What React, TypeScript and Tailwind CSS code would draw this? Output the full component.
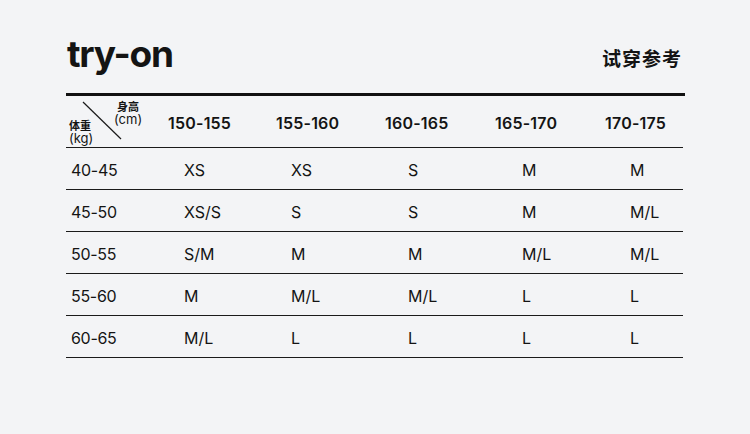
const heights = ['150-155', '155-160', '160-165', '165-170', '170-175'];

const rows: { weight: string; sizes: string[] }[] = [
  { weight: '40-45', sizes: ['XS', 'XS', 'S', 'M', 'M'] },
  { weight: '45-50', sizes: ['XS/S', 'S', 'S', 'M', 'M/L'] },
  { weight: '50-55', sizes: ['S/M', 'M', 'M', 'M/L', 'M/L'] },
  { weight: '55-60', sizes: ['M', 'M/L', 'M/L', 'L', 'L'] },
  { weight: '60-65', sizes: ['M/L', 'L', 'L', 'L', 'L'] },
];

// data cells sit a bit right of the header labels, not evenly
const cellPad = ['pl-[16px]', 'pl-[15px]', 'pl-[23px]', 'pl-[27px]', 'pl-[25px]'];

const grid = 'grid grid-cols-[102px_108px_109px_110px_110px_80px]';

export default function App() {
  return (
    <div
      className="w-[750px] h-[434px] bg-[#f3f4f6] text-[#141414] pl-[66px] pt-[24px]"
      style={{ fontFamily: 'Inter, "Noto Sans CJK SC", sans-serif' }}
    >
      <div className="w-[619px]">
        {/* Title */}
        <div className="flex items-end justify-between h-[49px]">
          <div className="pl-[1px] text-[37px] font-bold leading-none tracking-[-1.2px] mb-[1px]">
            try-on
          </div>
          <div
            className="text-[19px] font-semibold leading-none pr-[3px] mb-[6px] tracking-[1px]"
            style={{ fontFamily: '"Noto Sans CJK SC", sans-serif' }}
          >
            试穿参考
          </div>
        </div>

        <div className="mt-[20px] h-[3px] bg-[#111]" />

        {/* Table header */}
        <div className={`${grid} h-[52px] border-b-[1.5px] border-[#1a1a1a] w-[617px]`}>
          <div className="relative">
            <svg className="absolute left-0 top-0" width="60" height="52">
              <line x1="17" y1="6" x2="55" y2="43" stroke="#1a1a1a" strokeWidth="1.2" />
            </svg>
            <div className="absolute left-[48px] top-[4px]">
              <div
                className="pl-[3px] text-[11px] leading-[12px] font-bold"
                style={{ fontFamily: '"Noto Sans CJK SC", sans-serif' }}
              >
                身高
              </div>
              <div className="text-[13px] leading-[14px]">(cm)</div>
            </div>
            <div className="absolute left-[3px] top-[23px]">
              <div
                className="text-[11px] leading-[12px] font-bold"
                style={{ fontFamily: '"Noto Sans CJK SC", sans-serif' }}
              >
                体重
              </div>
              <div className="text-[13px] leading-[14px]">(kg)</div>
            </div>
          </div>
          {heights.map((h) => (
            <div key={h} className="flex items-center pt-[3px] text-[16px] font-semibold tracking-[0.2px]">
              {h}
            </div>
          ))}
        </div>

        {/* Rows */}
        {rows.map((r) => (
          <div key={r.weight} className={`${grid} h-[42px] border-b-[1.5px] border-[#1a1a1a] w-[617px]`}>
            <div className="flex items-center pl-[5px] pt-[2px] text-[16px] tracking-[-0.3px]">{r.weight}</div>
            {r.sizes.map((s, i) => (
              <div key={i} className={`flex items-center pt-[2px] text-[16px] ${cellPad[i]}`}>
                {s}
              </div>
            ))}
          </div>
        ))}
      </div>
    </div>
  );
}
